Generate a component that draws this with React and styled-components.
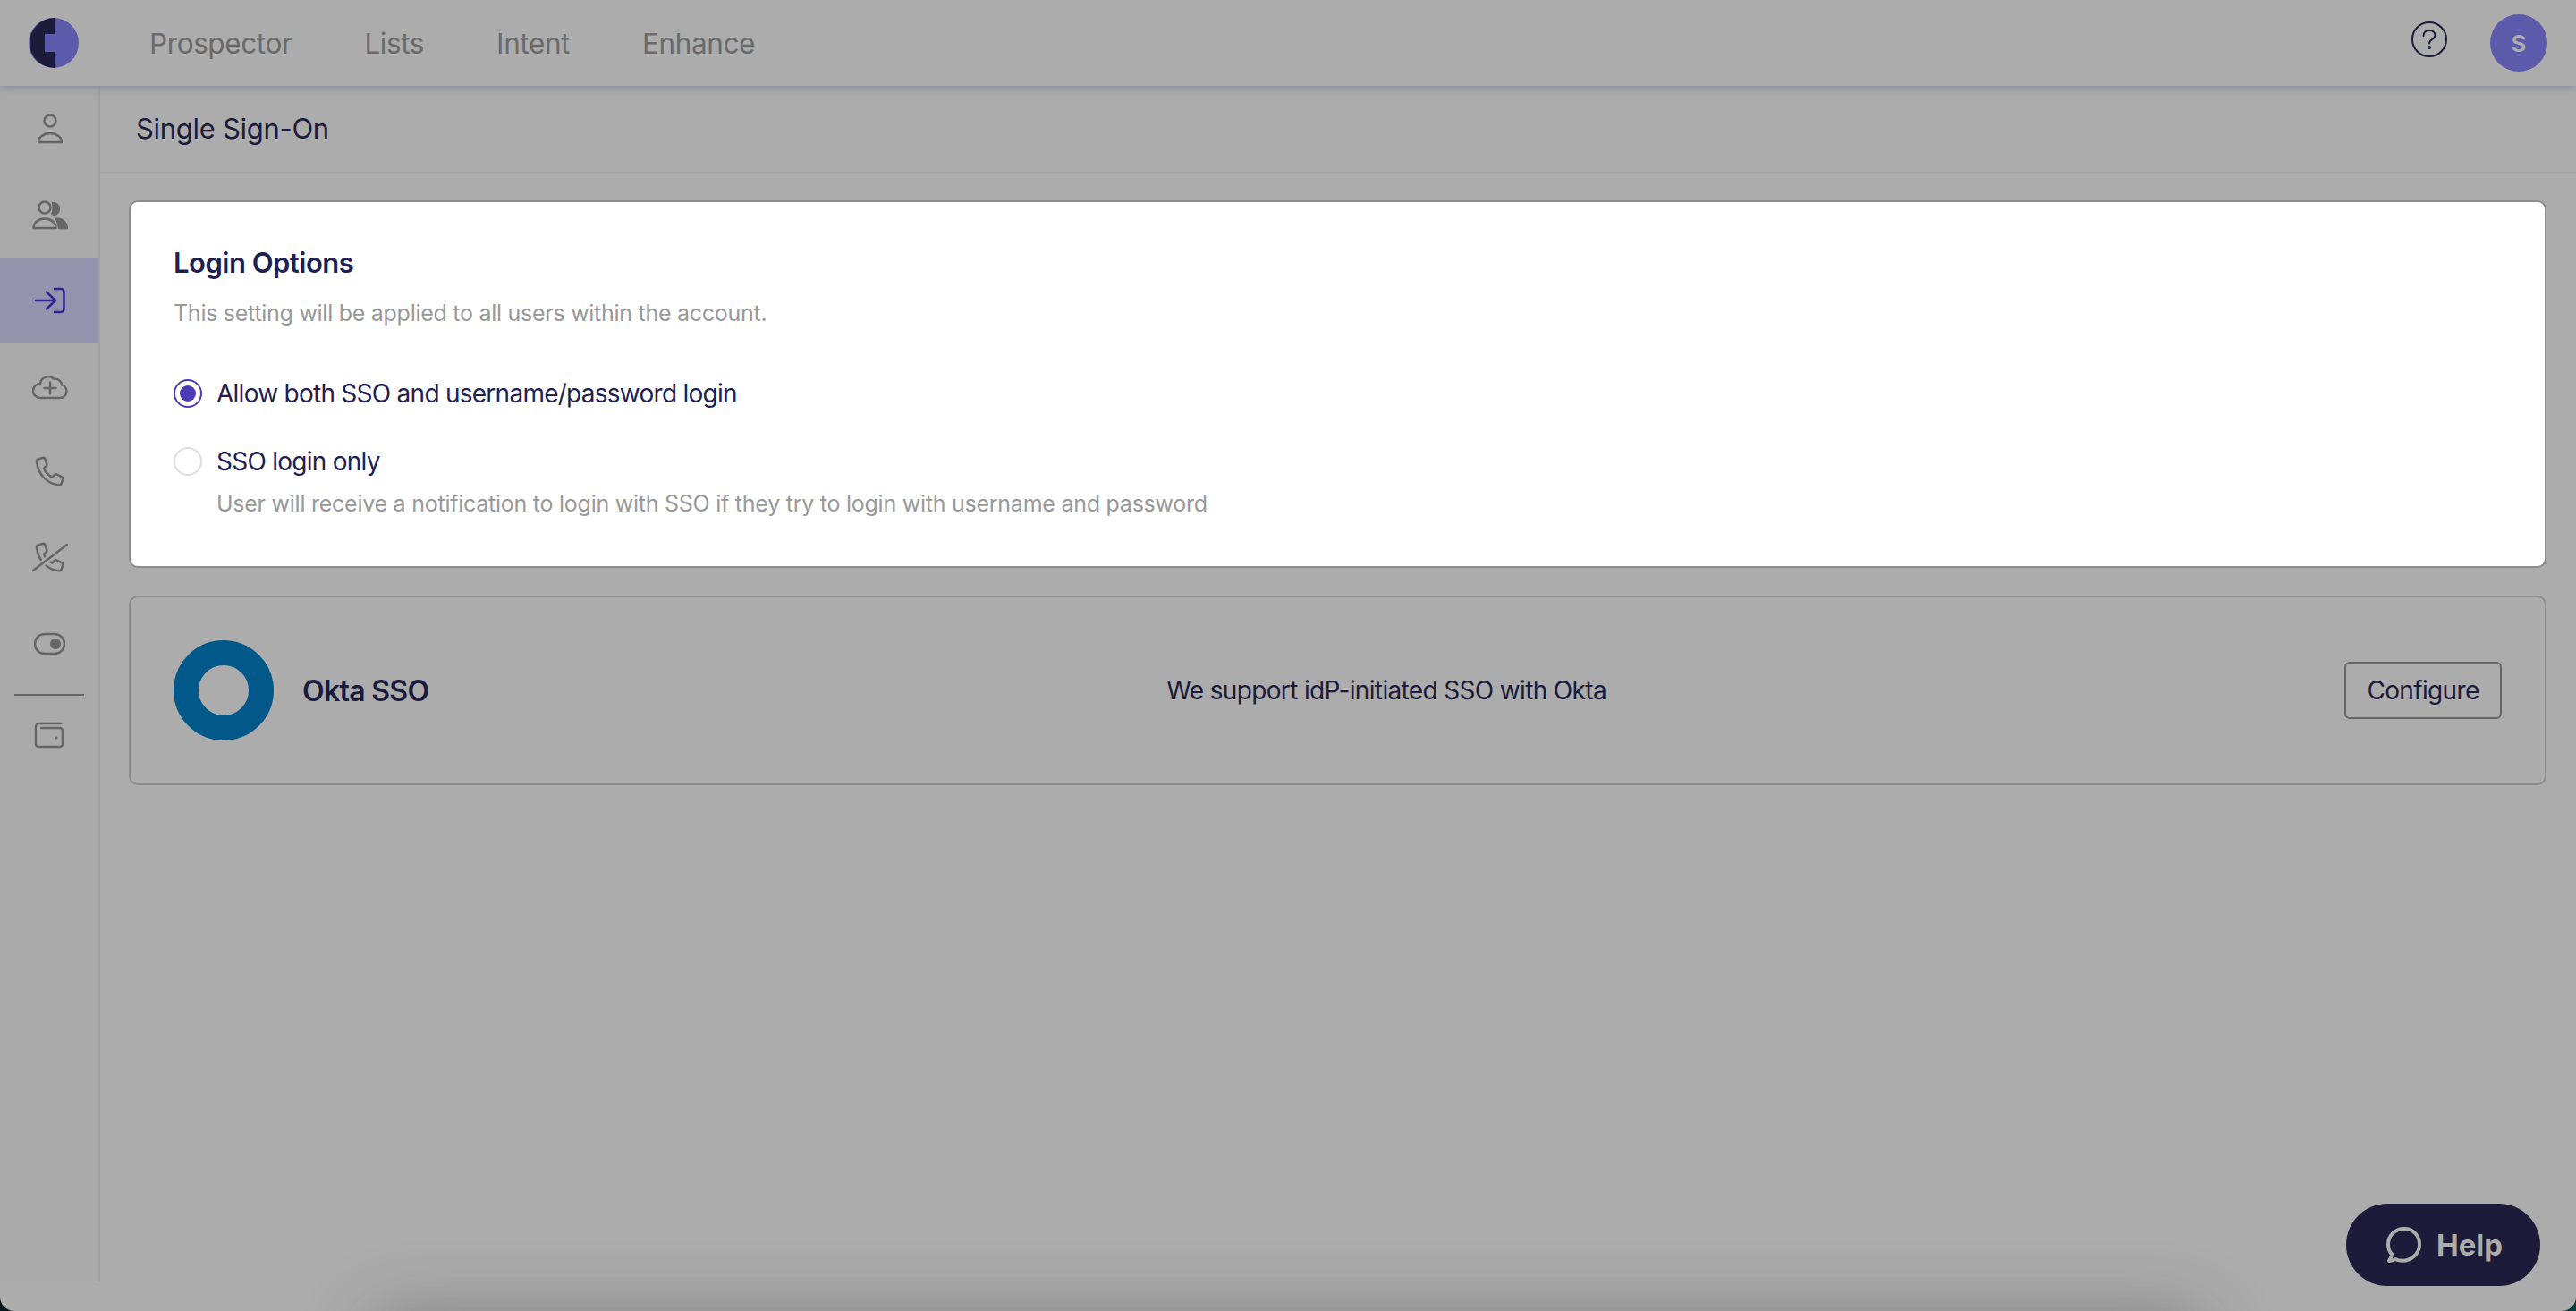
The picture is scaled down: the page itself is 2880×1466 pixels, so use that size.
import React from "react";
import styled, { createGlobalStyle } from "styled-components";

const GlobalStyle = createGlobalStyle`
  html, body {
    margin: 0;
    padding: 0;
    height: 100%;
    background: linear-gradient(90deg, #07191c 0%, #07191c 50%, #04403f 100%);
  }
  * {
    box-sizing: border-box;
  }
`;

const Page = styled.div`
  position: relative;
  display: flex;
  flex-direction: column;
  width: 2880px;
  height: 1466px;
  overflow: hidden;
  border-radius: 0 0 16px 16px;
  background: #acacac;
  font-family: Inter, "Liberation Sans", sans-serif;
  color: #1c1b3a;
`;

const TopBar = styled.header`
  position: relative;
  z-index: 2;
  display: flex;
  align-items: center;
  flex: 0 0 96px;
  padding: 0 32px;
  background: #acacac;
  box-shadow: 0 2px 10px rgba(106, 118, 150, 0.6);
`;

const NavList = styled.nav`
  display: flex;
  gap: 81px;
  margin-left: 79px;
  flex: 1;
`;

const NavLink = styled.span`
  font-size: 31.5px;
  letter-spacing: -0.4px;
  color: #6a6a6a;
`;

const HelpIcon = styled.svg`
  width: 40px;
  height: 40px;
  margin: -8px 48px 0 0;
`;

const Avatar = styled.div`
  display: flex;
  align-items: center;
  justify-content: center;
  width: 64px;
  height: 64px;
  border-radius: 50%;
  background: #5c5aab;
  color: #acacac;
  font-size: 26px;
  font-weight: 600;
`;

const Body = styled.div`
  display: flex;
  flex: 0 0 1337px;
`;

const Sidebar = styled.aside`
  display: flex;
  flex-direction: column;
  flex: 0 0 112px;
  border-right: 2px solid #a0a0a0;
  background: #aaaaaa;
`;

const SideItem = styled.div`
  display: flex;
  align-items: center;
  justify-content: center;
  height: ${(p) => p.$height || 96}px;
  padding-left: 2px;
  background: ${(p) => (p.$active ? "#9393ae" : "transparent")};
  color: ${(p) => (p.$active ? "#33278f" : "#666666")};
`;

const SideRule = styled.hr`
  width: 78px;
  height: 2px;
  margin: 8px 0 0 16px;
  border: 0;
  background: #666666;
`;

const Main = styled.main`
  display: flex;
  flex-direction: column;
  flex: 1;
  min-width: 0;
`;

const PageHeader = styled.div`
  display: flex;
  align-items: center;
  flex: 0 0 98px;
  padding: 0 0 2px 40px;
  border-bottom: 2px solid #a0a0a0;
  font-size: 31px;
  letter-spacing: -0.3px;
`;

const Content = styled.div`
  display: flex;
  flex-direction: column;
  gap: 31px;
  padding: 30px 33px 0 32px;
`;

const OptionsCard = styled.section`
  display: flex;
  flex-direction: column;
  height: 411px;
  padding: 48px 48px 0;
  border: 2px solid #8c8c8c;
  border-radius: 10px;
  background: #ffffff;
  color: #211f52;
`;

const CardTitle = styled.h2`
  margin: 0;
  font-size: 31px;
  line-height: 40px;
  font-weight: 600;
  letter-spacing: -0.5px;
`;

const CardHint = styled.p`
  margin: 20px 0 0;
  font-size: 25px;
  line-height: 32px;
  letter-spacing: -0.27px;
  color: #999999;
`;

const OptionRow = styled.label`
  display: flex;
  align-items: center;
  gap: 16px;
  height: 32px;
  margin-top: ${(p) => p.$top}px;
`;

const Radio = styled.span`
  display: flex;
  align-items: center;
  justify-content: center;
  width: 32px;
  height: 32px;
  border-radius: 50%;
  border: 2px solid ${(p) => (p.$checked ? "#4b3bb5" : "#dddddd")};

  &::after {
    content: "";
    display: ${(p) => (p.$checked ? "block" : "none")};
    width: 18px;
    height: 18px;
    border-radius: 50%;
    background: #4b3bb5;
  }
`;

const OptionLabel = styled.span`
  font-size: 28px;
  line-height: 32px;
  letter-spacing: -0.74px;
`;

const OptionHint = styled.p`
  margin: 15px 0 0 48px;
  font-size: 25px;
  line-height: 32px;
  letter-spacing: -0.25px;
  color: #999999;
`;

const ProviderCard = styled.section`
  display: flex;
  align-items: center;
  justify-content: space-between;
  height: 212px;
  padding: 0 48px;
  border: 2px solid #8c8c8c;
  border-radius: 10px;
`;

const ProviderName = styled.div`
  display: flex;
  align-items: center;
  gap: 32px;
  font-size: 32px;
  font-weight: 600;
  letter-spacing: -0.7px;
`;

const OktaRing = styled.span`
  width: 112px;
  height: 112px;
  border-radius: 50%;
  border: 28px solid #03588a;
`;

const ProviderText = styled.span`
  font-size: 28px;
  letter-spacing: -0.65px;
`;

const ConfigureButton = styled.button`
  width: 176px;
  height: 64px;
  padding: 0;
  border: 2px solid #666666;
  border-radius: 6px;
  background: transparent;
  font-family: inherit;
  font-size: 28px;
  letter-spacing: -0.65px;
  color: #1c1b3a;
`;

const HelpButton = styled.button`
  position: absolute;
  z-index: 3;
  right: 40px;
  bottom: 28px;
  display: flex;
  align-items: center;
  gap: 16px;
  width: 217px;
  height: 92px;
  padding: 0 0 0 45px;
  border: 0;
  border-radius: 46px;
  background: #1c1b3a;
  color: #acacac;
  font-family: inherit;
  font-size: 33px;
  font-weight: 700;
`;

const BottomShadow = styled.div`
  position: absolute;
  left: 420px;
  right: 420px;
  bottom: -80px;
  height: 70px;
  box-shadow: 0 0 80px 0 rgba(50, 50, 50, 0.42);
`;

const iconProps = {
  width: 40,
  height: 40,
  viewBox: "0 0 40 40",
  fill: "none",
  stroke: "currentColor",
  strokeWidth: 2.5,
  strokeLinecap: "round",
  strokeLinejoin: "round",
};

const PHONE_PATH =
  "M6.500 5.500l5-1.500c1.500-.4 2.500.3 3 1.500l1.800 5.500c.3 1-.1 2-1 2.600l-2.300 1.900c1.500 4.500 5 8 9.500 10l2.300-2.300c.8-.8 2-1 3-.5l5 2.500c1.200.6 1.600 1.800 1.200 3l-1.200 4.300c-.4 1.200-1.500 1.900-2.800 1.700C15.500 33 6.500 21.500 5 8.500c-.1-1.400.2-2.500 1.500-3Z";

const UserIcon = () => (
  <svg {...iconProps}>
    <circle cx="20" cy="11" r="6.500" />
    <path d="M7 35c0-6 6-10 13-10s13 4 13 10H7Z" />
  </svg>
);

const UsersIcon = () => (
  <svg {...iconProps}>
    <circle cx="14" cy="12" r="6.500" />
    <path d="M1.500 35c0-6 5.500-10.500 12.500-10.500S26.500 29 26.500 35h-25Z" />
    <path d="M23 7a6.500 6.500 0 0 1 2 12.800c-1.500-.2-2.500-.5-2.500-1 1.500-3.500 1.500-8 .5-11.800Z" fill="currentColor" />
    <path d="M27 24.500c6.500 0 11.500 4.500 11.800 10.500H30c0-4-1.500-7.500-3-10.500Z" fill="currentColor" />
  </svg>
);

const LoginIcon = () => (
  <svg {...iconProps}>
    <path d="M4 20h21" />
    <path d="M16 10.500l10 9.500-10 9.500" />
    <path d="M25 7h7a3.500 3.500 0 0 1 3.500 3.500v19a3.500 3.500 0 0 1-3.500 3.500h-7" />
  </svg>
);

const CloudPlusIcon = () => (
  <svg {...iconProps}>
    <path d="M9 33h22a7.500 7.500 0 0 0 2-14.700 7 7 0 0 0-8.500-6.300A9 9 0 0 0 9 17 8 8 0 0 0 9 33Z" />
    <path d="M20 15.500v13M13.500 22h13" />
  </svg>
);

const PhoneIcon = () => (
  <svg {...iconProps}>
    <path d={PHONE_PATH} />
  </svg>
);

const PhoneOffIcon = () => (
  <svg {...iconProps}>
    <path d={PHONE_PATH} />
    <path d="M1 34 39 5" stroke="#aaaaaa" strokeWidth="7" />
    <path d="M1 34 39 5" />
  </svg>
);

const ToggleIcon = () => (
  <svg {...iconProps}>
    <rect x="3" y="9" width="33" height="22" rx="11" />
    <circle cx="26" cy="20" r="6" fill="currentColor" stroke="none" />
  </svg>
);

const WalletIcon = () => (
  <svg {...iconProps}>
    <path d="M32 7H8a4 4 0 0 0-4 4v19a3 3 0 0 0 3 3h24a3 3 0 0 0 3-3V15a3 3 0 0 0-3-3H10" />
    <circle cx="27" cy="23" r="1.500" fill="currentColor" stroke="none" />
  </svg>
);

const ChatIcon = () => (
  <svg width="40" height="40" viewBox="0 0 40 40" fill="none" stroke="#acacac" strokeWidth="4" strokeLinecap="round" strokeLinejoin="round">
    <path d="M3 38c3 0 5-.5 7-2 2.500 1.300 5 1.800 8 1.800 10 0 19-7.800 19-18.300C37 9 29.500 2 20 2S2 9 2 19.500c0 5 1.500 8.500 4.500 11.500L3 38Z" />
  </svg>
);

const sideItems = [
  { key: "user", icon: <UserIcon /> },
  { key: "users", icon: <UsersIcon /> },
  { key: "login", icon: <LoginIcon />, active: true },
  { key: "cloud", icon: <CloudPlusIcon /> },
  { key: "phone", icon: <PhoneIcon /> },
  { key: "phone-off", icon: <PhoneOffIcon /> },
  { key: "toggle", icon: <ToggleIcon /> },
];

const navItems = ["Prospector", "Lists", "Intent", "Enhance"];

const App = () => {
  return (
    <>
      <GlobalStyle />
      <Page>
        <TopBar>
          <svg width="56" height="56" viewBox="0 0 56 56">
            <circle cx="28" cy="28" r="28" fill="#5c5aab" />
            <path d="M29 0A28 28 0 0 0 29 56V38H18V18H29Z" fill="#1c1b3a" />
          </svg>
          <NavList>
            {navItems.map((item) => (
              <NavLink key={item}>{item}</NavLink>
            ))}
          </NavList>
          <HelpIcon viewBox="0 0 40 40" fill="none" stroke="#1c1b3a" strokeWidth="2" strokeLinecap="round">
            <circle cx="20" cy="20" r="19" />
            <path d="M13.500 16c0-4 3-6 6.500-6s6.500 2 6.500 5.500c0 4.500-6.500 4.500-6.500 9" />
            <circle cx="20" cy="29" r="1" fill="#1c1b3a" />
          </HelpIcon>
          <Avatar>S</Avatar>
        </TopBar>
        <Body>
          <Sidebar>
            {sideItems.map((item) => (
              <SideItem key={item.key} $active={item.active}>
                {item.icon}
              </SideItem>
            ))}
            <SideRule />
            <SideItem $height={88}>
              <WalletIcon />
            </SideItem>
          </Sidebar>
          <Main>
            <PageHeader>Single Sign-On</PageHeader>
            <Content>
              <OptionsCard>
                <CardTitle>Login Options</CardTitle>
                <CardHint>This setting will be applied to all users within the account.</CardHint>
                <OptionRow $top={58}>
                  <Radio $checked />
                  <OptionLabel>Allow both SSO and username/password login</OptionLabel>
                </OptionRow>
                <OptionRow $top={44}>
                  <Radio />
                  <OptionLabel>SSO login only</OptionLabel>
                </OptionRow>
                <OptionHint>User will receive a notification to login with SSO if they try to login with username and password</OptionHint>
              </OptionsCard>
              <ProviderCard>
                <ProviderName>
                  <OktaRing />
                  Okta SSO
                </ProviderName>
                <ProviderText>We support idP-initiated SSO with Okta</ProviderText>
                <ConfigureButton>Configure</ConfigureButton>
              </ProviderCard>
            </Content>
          </Main>
        </Body>
        <BottomShadow />
        <HelpButton>
          <ChatIcon />
          Help
        </HelpButton>
      </Page>
    </>
  );
};

export default App;
